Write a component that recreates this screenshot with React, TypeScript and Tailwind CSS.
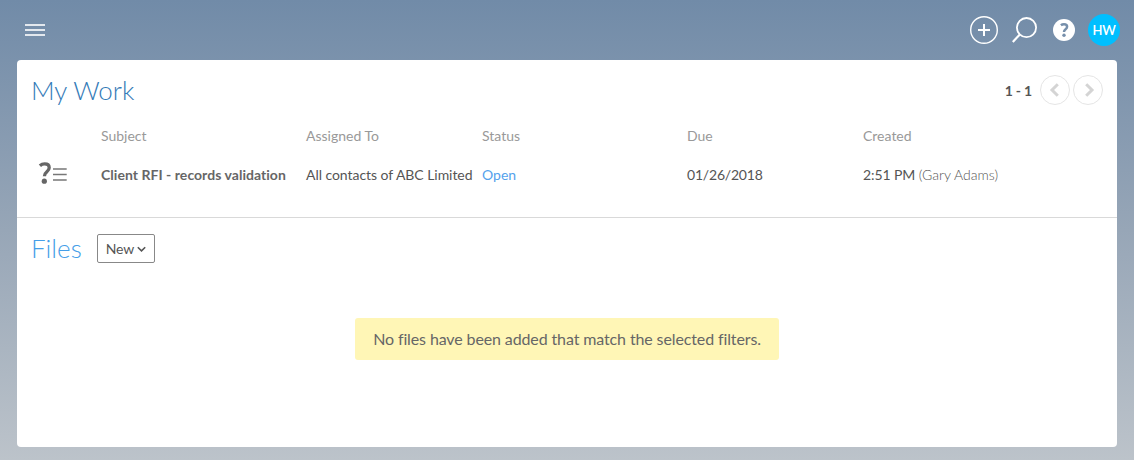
import React from "react";

const columns = ["", "Subject", "Assigned To", "Status", "Due", "Created"];
const grid = "grid grid-cols-[69px_205px_176px_205px_176px_1fr] pl-[15px]";

function TaskIcon() {
  return (
    <svg width="30" height="26" viewBox="0 0 30 26" className="ml-[6px] block" fill="none">
      <path d="M1.9 4.8C3.3 3.5 4.9 2.9 6.7 2.9c2.8 0 4.5 1.5 4.5 3.8 0 4.2-4.8 3.8-4.8 8.5" stroke="#666" strokeWidth="3.3" />
      <circle cx="6.3" cy="20.2" r="2.6" fill="#666" />
      <path d="M15 8h13.7M15 13.5h13.7M15 19h13.7" stroke="#777" strokeWidth="1.5" />
    </svg>
  );
}

function PageButton({ label, d }: { label: string; d: string }) {
  return (
    <button aria-label={label} className="size-[30px] rounded-full border border-[#e5e5e5]">
      <svg width="28" height="28" viewBox="0 0 28 28" fill="none" stroke="#d4d4d4" strokeWidth="3">
        <path d={d} />
      </svg>
    </button>
  );
}

function Toolbar() {
  return (
    <header className="flex h-[60px] items-center pr-[14px] pl-[25px]">
      <button aria-label="Menu" className="flex w-5 flex-col gap-[3px]">
        <span className="h-[2px] w-5 bg-[#e3e8ee]" />
        <span className="h-[2px] w-5 bg-[#e3e8ee]" />
        <span className="h-[2px] w-5 bg-[#e3e8ee]" />
      </button>
      <div className="ml-auto flex items-center">
        <svg width="28" height="28" viewBox="0 0 28 28" fill="none" stroke="#fff">
          <circle cx="14" cy="14" r="13.3" strokeWidth="1.4" />
          <path d="M8 14h12M14 8v12" strokeWidth="2" />
        </svg>
        <svg width="26" height="28" viewBox="0 0 26 28" fill="none" stroke="#fff" strokeWidth="1.8" className="ml-[14px]">
          <circle cx="14.5" cy="11.6" r="9.6" />
          <path d="M7.6 18.7L0.8 25.9" strokeWidth="2.2" />
        </svg>
        <svg width="22" height="22" viewBox="0 0 22 22" className="ml-[15px]">
          <circle cx="11" cy="11" r="11" fill="#fff" />
          <path d="M7.9 6.3C8.8 5.6 9.8 5.3 11 5.3c2 0 3.1.9 3.1 2.5 0 2.6-3.1 2.3-3.1 5.1" fill="none" stroke="#768fab" strokeWidth="2.5" />
          <circle cx="11" cy="16.3" r="1.7" fill="#768fab" />
        </svg>
        <div className="ml-[13px] flex size-8 items-center justify-center rounded-full bg-[#00bfff] text-[13px] font-semibold tracking-[-0.2px] text-white">
          <span className="pt-px">HW</span>
        </div>
      </div>
    </header>
  );
}

export default function App() {
  return (
    <div className="h-[460px] w-[1134px] bg-linear-to-b from-[#718ba8] via-[#97a6b7] to-[#bcc3ca] font-['Lato',sans-serif] text-[14px] text-[#555]">
      <Toolbar />
      <main className="mx-[17px] h-[387px] rounded-[4px] bg-white">
        <section className="h-[158px] border-b border-[#d9d9d9]">
          <div className="flex h-[60px] items-center pr-[14px] pl-[14px]">
            <h1 className="text-[26px] leading-[32px] font-light text-[#337ab7]">My Work</h1>
            <span className="mr-[8px] ml-auto pt-px font-bold tracking-[-0.2px]">1 - 1</span>
            <div className="flex gap-[3px]">
              <PageButton label="Previous page" d="M16.8 8.2L11 14l5.8 5.8" />
              <PageButton label="Next page" d="M12.2 8.2L18 14l-5.8 5.8" />
            </div>
          </div>
          <div className={`${grid} pt-[6px] leading-5 text-[#999]`}>
            {columns.map((c) => <span key={c}>{c}</span>)}
          </div>
          <div className={`${grid} mt-[14px] items-center leading-[26px] whitespace-nowrap`}>
            <TaskIcon />
            <span className="pt-[2px] font-bold tracking-[0.04px] text-[#666]">Client RFI - records validation</span>
            <span className="pt-[2px] tracking-[-0.05px]">All contacts of ABC Limited</span>
            <span className="pt-[2px] text-[#55a2ec]">Open</span>
            <span className="pt-[2px] tracking-[-0.2px]">01/26/2018</span>
            <span className="pt-[2px]"><span className="tracking-[-0.1px]">2:51 PM</span> <span className="font-light">(Gary Adams)</span></span>
          </div>
        </section>
        <section>
          <div className="flex items-center pt-[14px] pl-[14px]">
            <h2 className="text-[26px] leading-[32px] font-light text-[#459ee8]">Files</h2>
            <button className="ml-[15px] flex h-[29px] w-[58px] items-center rounded-[2px] border border-[#888] pl-[8px] tracking-[-0.2px]">
              New
              <svg width="9" height="7" viewBox="0 0 9 7" fill="none" stroke="#555" strokeWidth="1.6" className="mt-[2px] ml-[3px]">
                <path d="M.8 1.2l3.7 3.7 3.7-3.7" />
              </svg>
            </button>
          </div>
          <p className="mx-auto mt-[54px] flex h-[42px] w-[424px] items-center justify-center rounded-[3px] bg-[#fff6b6] text-[16px] tracking-[-0.12px] text-[#666] [font-variant-ligatures:common-ligatures]">
            No files have been added that match the selected filters.
          </p>
        </section>
      </main>
    </div>
  );
}
